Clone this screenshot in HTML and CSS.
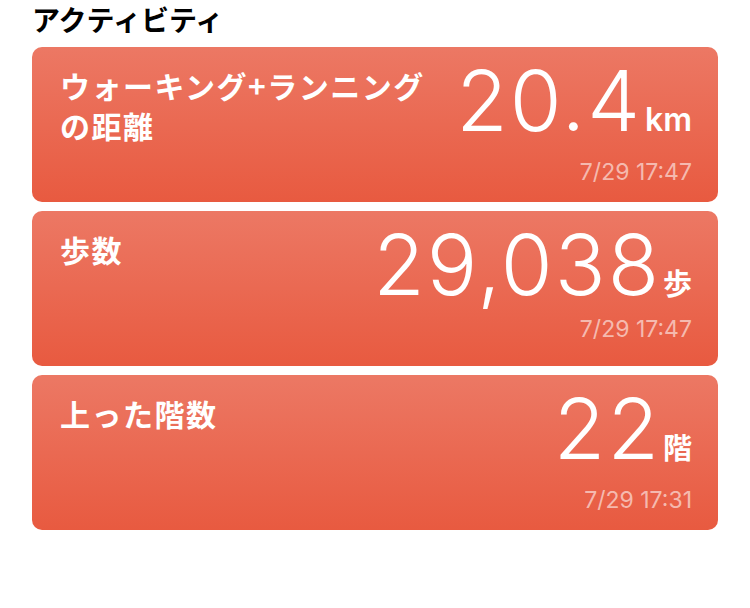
FILE: index.html
```html
<!DOCTYPE html>
<html lang="ja">
<head>
  <meta charset="UTF-8" />
  <title>アクティビティ</title>
  <link rel="stylesheet" href="styles.css">
</head>
<body>

  <h1 class="section-title">アクティビティ</h1>

  <div class="card-list">

    <!-- distance -->
    <div class="card">
      <div class="card-title">ウォーキング+ランニング<br>の距離</div>
      <div class="card-value">
        <div class="value-line">
          <span class="number">20.4</span><span class="unit unit-latin">km</span>
        </div>
        <div class="timestamp">7/29 17:47</div>
      </div>
    </div>

    <!-- steps -->
    <div class="card">
      <div class="card-title">歩数</div>
      <div class="card-value">
        <div class="value-line">
          <span class="number">29,038</span><span class="unit">歩</span>
        </div>
        <div class="timestamp timestamp-up">7/29 17:47</div>
      </div>
    </div>

    <!-- floors -->
    <div class="card">
      <div class="card-title">上った階数</div>
      <div class="card-value">
        <div class="value-line">
          <span class="number">22</span><span class="unit">階</span>
        </div>
        <div class="timestamp">7/29 17:31</div>
      </div>
    </div>

  </div>

</body>
</html>
```

FILE: styles.css
```css
body {
  margin: 0;
  padding: 0 32px;
  background: #fff;
  font-family: "Noto Sans CJK JP", "Noto Sans", sans-serif;
  color: #000;
}

.section-title {
  margin: 0;
  height: 47px;
  font-size: 28px;
  font-weight: 700;
  line-height: 38px;
}

.card-list {
  display: flex;
  flex-direction: column;
  gap: 9px;
}

.card {
  display: flex;
  justify-content: space-between;
  height: 155px;
  box-sizing: border-box;
  padding: 12px 26px 0 28px;
  border-radius: 10px;
  background: linear-gradient(#ec7864, #e85a40);
  color: #fff;
}

.card-title {
  margin-top: 6px;
  font-size: 30px;
  font-weight: 700;
  line-height: 40px;
  letter-spacing: 1.5px;
}

.card-value {
  display: flex;
  flex-direction: column;
  align-items: flex-end;
}

.value-line {
  display: flex;
  align-items: baseline;
  line-height: 84px;
  height: 84px;
}

.number {
  font-family: "Inter", "Roboto", sans-serif;
  font-weight: 300;
  font-size: 84px;
  letter-spacing: 2px;
}

.unit {
  margin-left: 2px;
  font-size: 29px;
  font-weight: 700;
}

.unit-latin {
  margin-left: 3px;
  font-family: "Inter", "Roboto", sans-serif;
  font-size: 32px;
  font-weight: 600;
}

.timestamp {
  margin-top: 17px;
  font-family: "Inter", "Roboto", sans-serif;
  font-size: 23px;
  line-height: 24px;
  color: rgba(255, 255, 255, 0.58);
}

.timestamp-up {
  margin-top: 10px;
}
```
